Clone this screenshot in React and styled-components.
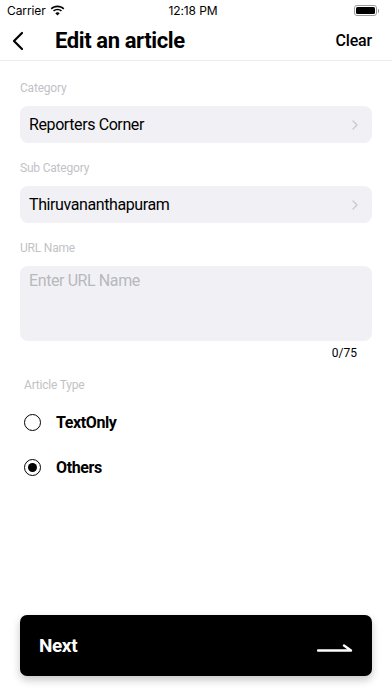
import React, { useState } from "react";
import styled, { createGlobalStyle } from "styled-components";

const GlobalStyle = createGlobalStyle`
  html, body {
    margin: 0;
    padding: 0;
    background: #fff;
  }
  body {
    font-family: Roboto, "Noto Sans", sans-serif;
    color: #000;
  }
  * { box-sizing: border-box; }
`;

const Screen = styled.div`
  width: 392px;
  height: 696px;
  display: flex;
  flex-direction: column;
  background: #fff;
  overflow: hidden;
`;

const StatusBar = styled.div`
  height: 21px;
  display: grid;
  grid-template-columns: 1fr auto 1fr;
  align-items: center;
  padding: 0 13px 0 7px;
  font-family: Inter, Roboto, sans-serif;
  font-size: 12px;
  letter-spacing: -0.1px;
`;

const Carrier = styled.div`
  display: flex;
  align-items: center;
  gap: 4px;
`;

const Battery = styled.div`
  justify-self: end;
  display: flex;
  align-items: center;
  gap: 1px;
`;

const BatteryBody = styled.div`
  width: 23px;
  height: 11px;
  border: 1px solid #9a9a9a;
  border-radius: 3px;
  padding: 1px;
  &::after {
    content: "";
    display: block;
    height: 100%;
    background: #000;
    border-radius: 1.5px;
  }
`;

const BatteryTip = styled.div`
  width: 1.5px;
  height: 4px;
  background: #9a9a9a;
  border-radius: 0 1px 1px 0;
`;

const NavBar = styled.div`
  height: 40px;
  display: flex;
  align-items: center;
  padding: 0 20px 0 12px;
  border-bottom: 1px solid #ececec;
`;

const BackButton = styled.button`
  border: none;
  background: none;
  padding: 0;
  width: 43px;
  height: 28px;
  display: flex;
  align-items: center;
`;

const Title = styled.h1`
  margin: 0;
  flex: 1;
  font-size: 22px;
  font-weight: 700;
  letter-spacing: -0.4px;
`;

const ClearButton = styled.button`
  border: none;
  background: none;
  padding: 0;
  font-family: Roboto, sans-serif;
  font-size: 16px;
  font-weight: 500;
  color: #000;
  letter-spacing: -0.2px;
`;

const Form = styled.div`
  display: flex;
  flex-direction: column;
  padding: 20px 20px 0;
  flex: 1;
`;

const Label = styled.div`
  font-size: 12px;
  color: #c2c2c6;
  letter-spacing: -0.2px;
  margin-left: ${(p) => p.$indent || 0}px;
  margin-bottom: ${(p) => p.$gap ?? 11}px;
`;

const SelectField = styled.div`
  height: 37px;
  background: #f1f1f5;
  border-radius: 8px;
  display: flex;
  align-items: center;
  justify-content: space-between;
  padding: 0 14px 0 9px;
  font-size: 16px;
  letter-spacing: -0.4px;
  margin-bottom: 18px;
`;

const TextArea = styled.textarea`
  height: 75px;
  background: #f1f1f5;
  border: none;
  border-radius: 8px;
  resize: none;
  padding: 5px 9px;
  font-family: Roboto, sans-serif;
  font-size: 16px;
  letter-spacing: -0.4px;
  outline: none;
  &::placeholder {
    color: #b8b8bd;
  }
`;

const Counter = styled.div`
  text-align: right;
  font-size: 12px;
  padding-right: 15px;
  margin-top: 5px;
  margin-bottom: 18px;
`;

const RadioRow = styled.label`
  display: flex;
  align-items: center;
  gap: 15px;
  height: 45px;
  padding-left: 4px;
  font-size: 16px;
  font-weight: 700;
  letter-spacing: -0.4px;
  cursor: pointer;
`;

const RadioCircle = styled.span`
  width: 17px;
  height: 17px;
  border: 1.5px solid #000;
  border-radius: 50%;
  display: flex;
  align-items: center;
  justify-content: center;
  &::after {
    content: "";
    width: 9px;
    height: 9px;
    border-radius: 50%;
    background: ${(p) => (p.$checked ? "#000" : "transparent")};
  }
`;

const Footer = styled.div`
  margin-top: auto;
  padding: 0 20px 20px;
`;

const NextButton = styled.button`
  width: 100%;
  height: 61px;
  border: none;
  border-radius: 7px;
  background: #000;
  color: #fff;
  display: flex;
  align-items: center;
  justify-content: space-between;
  padding: 0 19px 0 19px;
  box-shadow: 0 4px 8px rgba(0, 0, 0, 0.22);
  font-family: Roboto, sans-serif;
  font-size: 19px;
  font-weight: 700;
  letter-spacing: -0.4px;
`;

const Chevron = () => (
  <svg width="6" height="10" viewBox="0 0 6 10" fill="none">
    <path d="M1 1l4 4-4 4" stroke="#c7c7cc" strokeWidth="1.2" strokeLinecap="round" strokeLinejoin="round" />
  </svg>
);

const Wifi = () => (
  <svg width="15" height="11" viewBox="0 0 15 11">
    <path d="M7.5 2.2c2.2 0 4.2.8 5.7 2.2l1.1-1.1C12.5 1.6 10.1.6 7.5.6S2.5 1.6.7 3.3l1.1 1.1c1.5-1.4 3.5-2.2 5.7-2.2z" fill="#000" />
    <path d="M7.5 5.3c1.3 0 2.5.5 3.4 1.3L12 5.5C10.8 4.4 9.2 3.7 7.5 3.7S4.2 4.4 3 5.5l1.1 1.1c.9-.8 2.1-1.3 3.4-1.3z" fill="#000" />
    <path d="M7.5 10.4l2.2-2.2c-.6-.5-1.4-.9-2.2-.9s-1.6.3-2.2.9z" fill="#000" />
  </svg>
);

export default function App() {
  const [type, setType] = useState("Others");
  const [url, setUrl] = useState("");

  return (
    <>
      <GlobalStyle />
      <Screen>
        <StatusBar>
          <Carrier>
            Carrier <Wifi />
          </Carrier>
          <span>12:18 PM</span>
          <Battery>
            <BatteryBody />
            <BatteryTip />
          </Battery>
        </StatusBar>
        <NavBar>
          <BackButton aria-label="Back">
            <svg width="12" height="20" viewBox="0 0 12 20" fill="none">
              <path d="M10 2L2 10l8 8" stroke="#000" strokeWidth="2.2" strokeLinecap="round" strokeLinejoin="round" />
            </svg>
          </BackButton>
          <Title>Edit an article</Title>
          <ClearButton>Clear</ClearButton>
        </NavBar>
        <Form>
          <Label>Category</Label>
          <SelectField>
            Reporters Corner
            <Chevron />
          </SelectField>
          <Label>Sub Category</Label>
          <SelectField>
            Thiruvananthapuram
            <Chevron />
          </SelectField>
          <Label>URL Name</Label>
          <TextArea
            placeholder="Enter URL Name"
            maxLength={75}
            value={url}
            onChange={(e) => setUrl(e.target.value)}
          />
          <Counter>{url.length}/75</Counter>
          <Label $indent={4} $gap={8}>
            Article Type
          </Label>
          {["TextOnly", "Others"].map((t) => (
            <RadioRow key={t} onClick={() => setType(t)}>
              <RadioCircle $checked={type === t} />
              {t}
            </RadioRow>
          ))}
        </Form>
        <Footer>
          <NextButton>
            Next
            <svg width="36" height="12" viewBox="0 0 36 12" fill="none">
              <path d="M1 10.5h33L27 5.5" stroke="#fff" strokeWidth="2.4" strokeLinecap="round" strokeLinejoin="round" />
            </svg>
          </NextButton>
        </Footer>
      </Screen>
    </>
  );
}
